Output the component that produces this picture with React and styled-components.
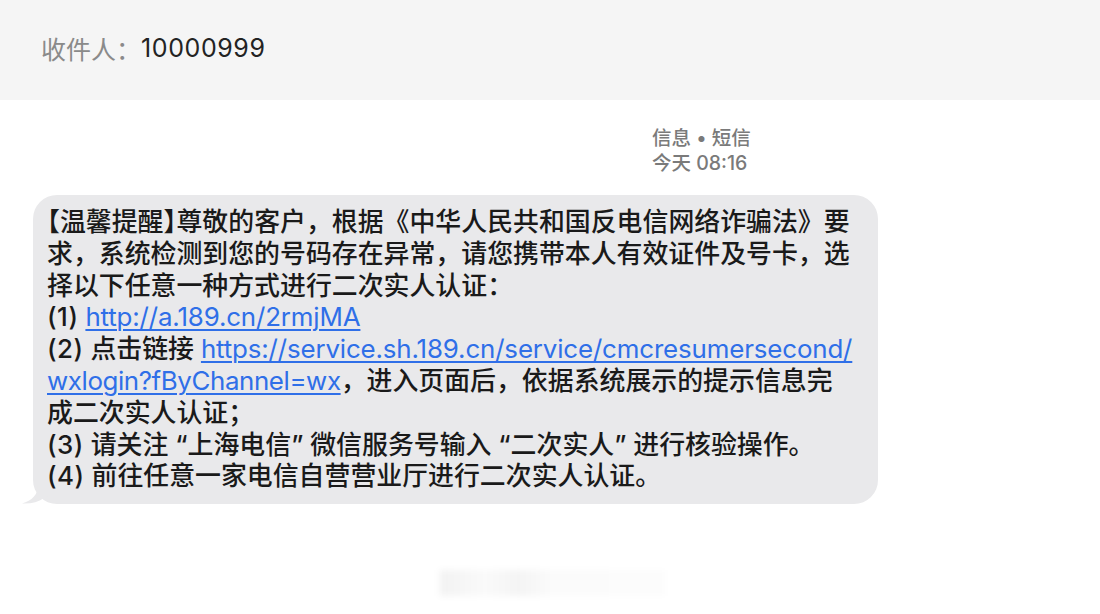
import React from "react"
import styled, { createGlobalStyle } from "styled-components"

const GlobalStyle = createGlobalStyle`
    body{
        margin: 0;
        background: #FFFFFF;
        font-family: "Inter", "Noto Sans CJK SC", sans-serif;
    }
`

export default function App(){
    return (
        <>
            <GlobalStyle />
            <Page>
                <Header>
                    <Label>收件人：</Label>
                    <Numero>10000999</Numero>
                </Header>
                <Conversa>
                    <Meta>
                        <span>信息 • 短信</span>
                        <span>今天 08:16</span>
                    </Meta>
                    <Balao>
                        <Meia>【</Meia>温馨提醒<Meia>】</Meia>尊敬的客户，根据《中华人民共和国反电信网络诈骗法》要<br />
                        求，系统检测到您的号码存在异常，请您携带本人有效证件及号卡，选<br />
                        择以下任意一种方式进行二次实人认证：<br />
                        <Num>(1)</Num> <Link>http://a.189.cn/2rmjMA</Link><br />
                        <Num>(2)</Num> 点击链接 <Link>https://service.sh.189.cn/service/cmcresumersecond/</Link><br />
                        <Link $aperto>wxlogin?fByChannel=wx</Link>，进入页面后，依据系统展示的提示信息完<br />
                        成二次实人认证；<br />
                        <Num>(3)</Num> 请关注 “上海电信” 微信服务号输入 “二次实人” 进行核验操作。<br />
                        <Num>(4)</Num> 前往任意一家电信自营营业厅进行二次实人认证。
                        <Cauda width="28" height="18" viewBox="0 0 28 18">
                            <path d="M16 0 C16 8 10 15 0 17.5 C9 18 16 16 22 12 L28 9 L28 0 Z" fill="#E9E9EB" />
                        </Cauda>
                    </Balao>
                    <MarcaDagua />
                </Conversa>
            </Page>
        </>
    )
}

const Page = styled.div`
    width: 1100px;
    height: 614px;
    overflow: hidden;
`

const Header = styled.div`
    height: 100px;
    background: #F5F5F5;
    display: flex;
    align-items: center;
    padding-left: 41px;
    font-size: 25px;
    padding-bottom: 4px;
    box-sizing: border-box;
`

const Label = styled.span`
    color: #8A8A8A;
`

const Numero = styled.span`
    color: #232323;
    letter-spacing: 0.6px;
`

const Conversa = styled.div`
    display: flex;
    flex-direction: column;
    align-items: flex-start;
`

const Meta = styled.div`
    display: flex;
    flex-direction: column;
    margin: 26px 0 0 652px;
    font-size: 19.5px;
    font-weight: 500;
    line-height: 25px;
    color: #7A7A7A;
`

const Balao = styled.div`
    position: relative;
    margin: 19px 0 0 33px;
    width: 845px;
    box-sizing: border-box;
    padding: 11px 10px 12px 14px;
    background: #E9E9EB;
    border-radius: 24px;
    font-size: 25.9px;
    font-weight: 500;
    line-height: 31.8px;
    color: #1A1A1A;
    white-space: nowrap;
`

const Meia = styled.span`
    font-feature-settings: "halt";
`

const Num = styled.span`
    letter-spacing: 0.5px;
`

const Link = styled.span`
    color: #2F6FE8;
    font-weight: 400;
    letter-spacing: ${(props) => props.$aperto ? "-0.4px" : "-0.15px"};
    text-decoration: underline;
    text-decoration-thickness: 1.5px;
    text-underline-offset: 3px;
`

const Cauda = styled.svg`
    position: absolute;
    left: -11px;
    bottom: 0;
`

const MarcaDagua = styled.div`
    margin: 66px 0 0 440px;
    width: 225px;
    height: 26px;
    background: linear-gradient(90deg, rgba(0,0,0,0.05) 0%, rgba(0,0,0,0.02) 20%, rgba(0,0,0,0.045) 35%, rgba(0,0,0,0.015) 50%, rgba(0,0,0,0.01) 100%);
    filter: blur(3px);
`
